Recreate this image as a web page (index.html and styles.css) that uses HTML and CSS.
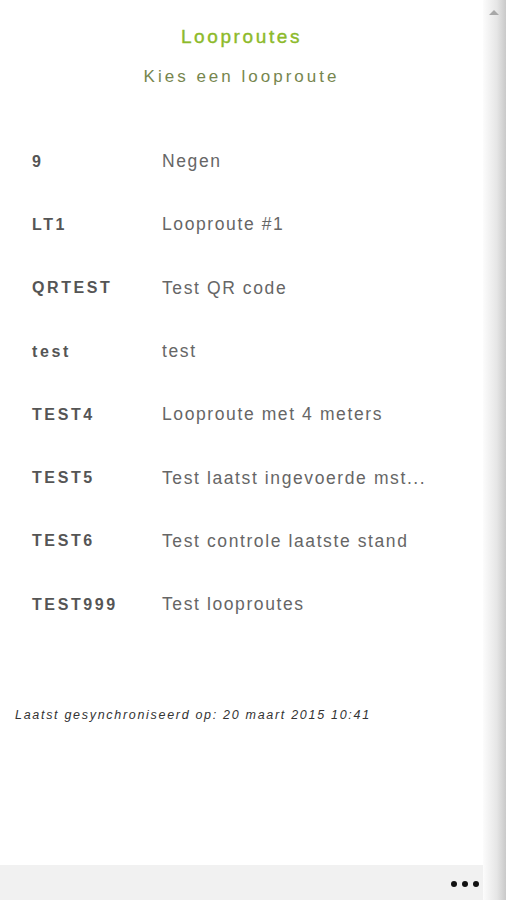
FILE: index.html
```html
<!DOCTYPE html>
<html>
<head>
<meta charset="utf-8">
<link rel="stylesheet" href="styles.css">
</head>
<body>
<div class="screen">
  <div class="page">
    <header class="head">
      <h1 class="title">Looproutes</h1>
      <h2 class="subtitle">Kies een looproute</h2>
    </header>
    <ul class="routes">
      <li class="route"><span class="code">9</span><span class="name">Negen</span></li>
      <li class="route"><span class="code">LT1</span><span class="name">Looproute #1</span></li>
      <li class="route"><span class="code">QRTEST</span><span class="name">Test QR code</span></li>
      <li class="route"><span class="code">test</span><span class="name">test</span></li>
      <li class="route"><span class="code">TEST4</span><span class="name">Looproute met 4 meters</span></li>
      <li class="route"><span class="code">TEST5</span><span class="name">Test laatst ingevoerde mst...</span></li>
      <li class="route"><span class="code">TEST6</span><span class="name">Test controle laatste stand</span></li>
      <li class="route"><span class="code">TEST999</span><span class="name">Test looproutes</span></li>
    </ul>
    <p class="sync">Laatst gesynchroniseerd op: 20 maart 2015 10:41</p>
    <div class="spacer"></div>
    <footer class="appbar"><span class="dots"><i></i><i></i><i></i></span></footer>
  </div>
  <div class="scrollbar"><span class="arrow"></span></div>
</div>
</body>
</html>
```
FILE: styles.css
```css
* { box-sizing: border-box; }
html, body { margin: 0; padding: 0; background: #fff; }
body { font-family: "Liberation Sans", Arial, sans-serif; }
.screen { display: flex; width: 506px; height: 900px; overflow: hidden; }
.page { width: 483px; display: flex; flex-direction: column; background: #fff; }
.head { text-align: center; padding-top: 25px; }
.title { margin: 0; font-size: 19px; font-weight: normal; color: #8dba2a; letter-spacing: 2.6px; line-height: 24px; -webkit-text-stroke: 0.4px #8dba2a; }
.subtitle { margin: 17px 0 0; font-size: 17px; font-weight: normal; color: #76864e; letter-spacing: 3px; line-height: 22px; }
.routes { list-style: none; margin: 0; padding: 0; margin-top: 42px; }
.route { display: flex; align-items: center; height: 63.3px; padding-left: 32px; font-size: 17px; }
.code { width: 130px; font-weight: bold; color: #555; letter-spacing: 2.6px; font-size: 16px; }
.name { color: #666; white-space: nowrap; letter-spacing: 1.6px; font-size: 17.5px; }
.sync { margin: 72px 0 0 15px; font-size: 12.5px; font-style: italic; color: #333; letter-spacing: 1.7px; }
.spacer { flex: 1; }
.appbar { height: 35px; background: #f1f1f1; display: flex; justify-content: flex-end; align-items: center; padding-right: 4px; }
.dots { display: flex; gap: 5px; margin-top: 2px; }
.dots i { width: 6px; height: 6px; border-radius: 50%; background: #111; }
.scrollbar { width: 23px; height: 900px; background: linear-gradient(to right, #fcfcfc, #e6e6e6 60%, #c9c9c9); position: relative; }
.arrow { position: absolute; left: 6px; top: 10px; width: 0; height: 0; border-left: 5px solid transparent; border-right: 5px solid transparent; border-bottom: 5px solid #a8a8a8; }
```
